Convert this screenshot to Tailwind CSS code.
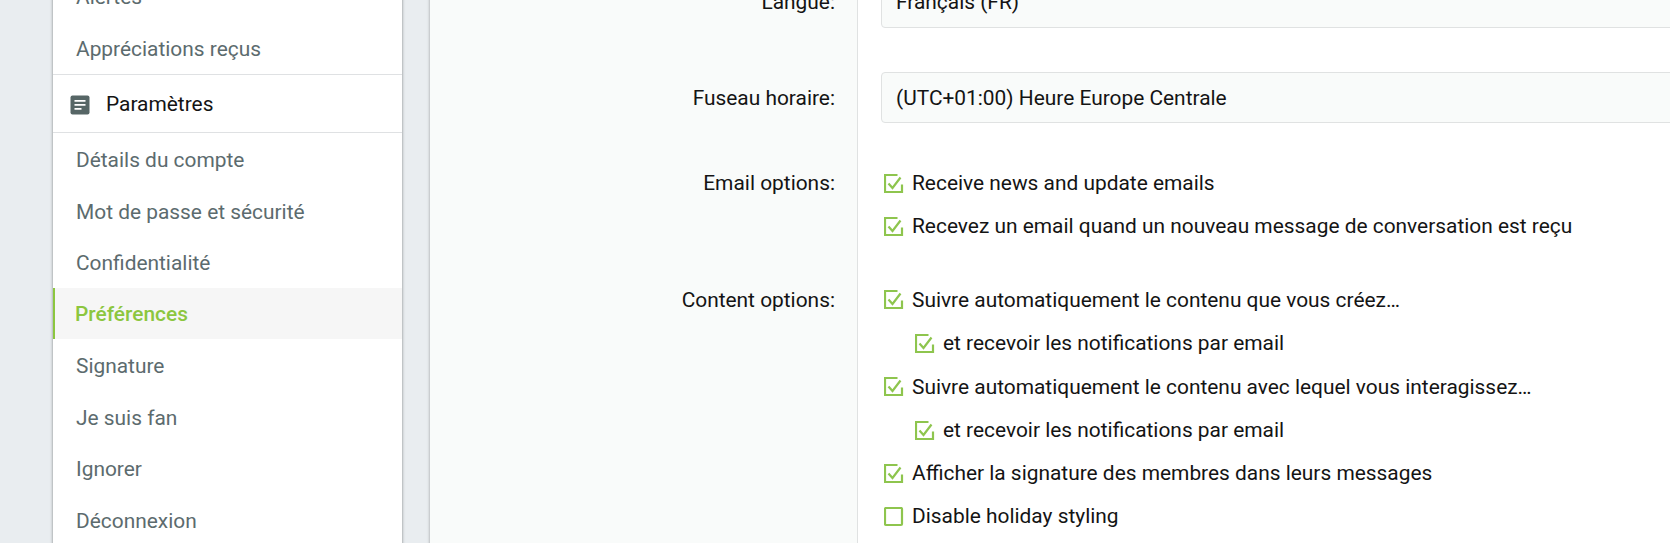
<!DOCTYPE html>
<html lang="fr">

<head>
    <meta charset="UTF-8">
    <title>Préférences</title>
    <script src="https://cdn.jsdelivr.net/npm/@tailwindcss/browser@4"></script>
</head>

<body class="bg-[#e9edf0] h-[543px] overflow-hidden font-['Roboto',sans-serif] text-[20.9px] text-[#141414]">

    <div class="flex items-stretch h-[620px] -mt-[29px] pl-[53px]">

        <!-- sidebar -->
        <nav class="w-[349px] shrink-0 bg-white shadow-[0_0_3px_rgba(0,0,0,0.45)] text-[#5c6b6e]">
            <a class="flex items-center h-[51.5px] pl-[23px] pt-[2px]">Alertes</a>
            <a class="flex items-center h-[51.5px] pl-[23px] pt-[2px]">Appréciations reçus</a>
            <div class="flex items-center h-[59px] border-y border-[#dfe1e3] pl-[17px] pt-[2px] text-[#141414]">
                <svg class="w-[20px] h-[20px] mr-[16px]" viewBox="0 0 20 20">
                    <rect x="0.5" y="0.5" width="19" height="19" rx="2" fill="#566666"/>
                    <path d="M4.500 5.800h11M4.500 9.800h11M4.500 13.800h7" stroke="#fff" stroke-width="1.800" fill="none"/>
                </svg>
                Paramètres
            </div>
            <a class="flex items-center h-[51.5px] pl-[23px] pt-[4px]">Détails du compte</a>
            <a class="flex items-center h-[51.5px] pl-[23px] pt-[4px]">Mot de passe et sécurité</a>
            <a class="flex items-center h-[51.5px] pl-[23px] pt-[4px]">Confidentialité</a>
            <a class="flex items-center h-[51.5px] pl-[20px] pt-[2px] border-l-2 border-[#8cc63f] bg-[#f6f6f6] text-[#8cc63f] font-medium">Préférences</a>
            <a class="flex items-center h-[51.5px] pl-[23px] pt-[4px]">Signature</a>
            <a class="flex items-center h-[51.5px] pl-[23px] pt-[4px]">Je suis fan</a>
            <a class="flex items-center h-[51.5px] pl-[23px] pt-[4px]">Ignorer</a>
            <a class="flex items-center h-[51.5px] pl-[23px] pt-[4px]">Déconnexion</a>
        </nav>

        <!-- form panel -->
        <main class="ml-[28px] flex-1 min-w-0 bg-white shadow-[0_0_3px_rgba(0,0,0,0.35)] overflow-hidden">
            <div class="grid grid-cols-[428px_1fr] grid-rows-[auto_auto_auto_1fr] h-full">

                <div class="flex items-center justify-end pt-[6px] bg-[#f9fbfa] border-r border-[#e0e2e2] pr-[22px]">Langue:</div>
                <div class="pl-[23px] pt-[6px] -mr-[4px]">
                    <div class="flex items-center h-[51px] pl-[14px] pt-[1px] bg-[#f9fbfa] border border-[#e0e2e2] rounded-[4px]">Français (FR)</div>
                </div>

                <div class="flex justify-end items-center pt-[47px] bg-[#f9fbfa] border-r border-[#e0e2e2] pr-[22px]">Fuseau horaire:</div>
                <div class="pl-[23px] pt-[44px] -mr-[4px]">
                    <div class="flex items-center h-[51px] pl-[14px] pt-[3px] bg-[#f9fbfa] border border-[#e0e2e2] rounded-[4px]">(UTC+01:00) Heure Europe Centrale</div>
                </div>

                <div class="flex justify-end items-start pt-[39px] bg-[#f9fbfa] border-r border-[#e0e2e2] pr-[22px]">
                    <span class="flex items-center h-[43.3px]">Email options:</span>
                </div>
                <ul class="pl-[26px] pt-[39px]">
                    <li class="flex items-center h-[43.3px]">
                        <svg class="w-[20px] h-[20px] mr-[8px]" viewBox="0 0 20 20" fill="none" stroke="#8ec54e" stroke-width="2.200">
                            <path d="M18 10.500V18H1V1h12.500"/><path d="M4.500 9.500l4 4.500 8-10.500"/>
                        </svg>
                        Receive news and update emails
                    </li>
                    <li class="flex items-center h-[43.3px]">
                        <svg class="w-[20px] h-[20px] mr-[8px]" viewBox="0 0 20 20" fill="none" stroke="#8ec54e" stroke-width="2.200">
                            <path d="M18 10.500V18H1V1h12.500"/><path d="M4.500 9.500l4 4.500 8-10.500"/>
                        </svg>
                        Recevez un email quand un nouveau message de conversation est reçu
                    </li>
                </ul>

                <div class="flex justify-end items-start pt-[30px] bg-[#f9fbfa] border-r border-[#e0e2e2] pr-[22px]">
                    <span class="flex items-center h-[43.3px]">Content options:</span>
                </div>
                <ul class="pl-[26px] pt-[30px]">
                    <li class="flex items-center h-[43.5px]">
                        <svg class="w-[20px] h-[20px] mr-[8px]" viewBox="0 0 20 20" fill="none" stroke="#8ec54e" stroke-width="2.200">
                            <path d="M18 10.500V18H1V1h12.500"/><path d="M4.500 9.500l4 4.500 8-10.500"/>
                        </svg>
                        Suivre automatiquement le contenu que vous créez…
                    </li>
                    <li class="flex items-center h-[43.5px] pl-[31px]">
                        <svg class="w-[20px] h-[20px] mr-[8px]" viewBox="0 0 20 20" fill="none" stroke="#8ec54e" stroke-width="2.200">
                            <path d="M18 10.500V18H1V1h12.500"/><path d="M4.500 9.500l4 4.500 8-10.500"/>
                        </svg>
                        et recevoir les notifications par email
                    </li>
                    <li class="flex items-center h-[43.5px]">
                        <svg class="w-[20px] h-[20px] mr-[8px]" viewBox="0 0 20 20" fill="none" stroke="#8ec54e" stroke-width="2.200">
                            <path d="M18 10.500V18H1V1h12.500"/><path d="M4.500 9.500l4 4.500 8-10.500"/>
                        </svg>
                        Suivre automatiquement le contenu avec lequel vous interagissez…
                    </li>
                    <li class="flex items-center h-[43.3px] pl-[31px]">
                        <svg class="w-[20px] h-[20px] mr-[8px]" viewBox="0 0 20 20" fill="none" stroke="#8ec54e" stroke-width="2.200">
                            <path d="M18 10.500V18H1V1h12.500"/><path d="M4.500 9.500l4 4.500 8-10.500"/>
                        </svg>
                        et recevoir les notifications par email
                    </li>
                    <li class="flex items-center h-[43px]">
                        <svg class="w-[20px] h-[20px] mr-[8px]" viewBox="0 0 20 20" fill="none" stroke="#8ec54e" stroke-width="2.200">
                            <path d="M18 10.500V18H1V1h12.500"/><path d="M4.500 9.500l4 4.500 8-10.500"/>
                        </svg>
                        Afficher la signature des membres dans leurs messages
                    </li>
                    <li class="flex items-center h-[43.3px]">
                        <svg class="w-[20px] h-[20px] mr-[8px]" viewBox="0 0 20 20" fill="none" stroke="#8ec54e" stroke-width="2.200">
                            <rect x="1" y="1" width="17" height="17" rx="1"/>
                        </svg>
                        Disable holiday styling
                    </li>
                </ul>
            </div>
        </main>
    </div>

</body>
</html>
